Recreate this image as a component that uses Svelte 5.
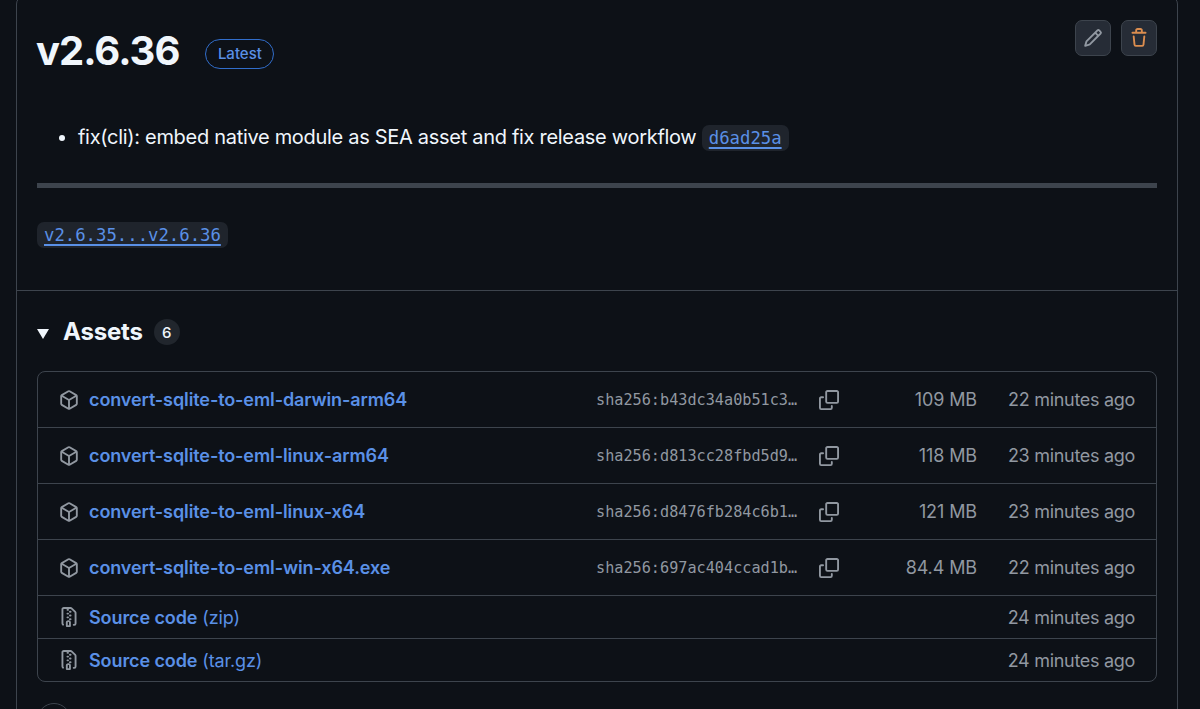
<script>
  const pkg = "m8.878.392 5.25 3.045c.54.314.872.89.872 1.514v6.098a1.75 1.75 0 0 1-.872 1.514l-5.25 3.045a1.75 1.75 0 0 1-1.756 0l-5.25-3.045A1.75 1.75 0 0 1 1 11.049V4.951c0-.624.332-1.201.872-1.514L7.122.392a1.75 1.75 0 0 1 1.756 0ZM7.875 1.69l-4.63 2.685L8 7.133l4.755-2.758-4.63-2.685a.248.248 0 0 0-.25 0ZM2.5 5.677v5.372c0 .09.047.171.125.216l4.625 2.683V8.432Zm6.25 8.271 4.625-2.683a.25.25 0 0 0 .125-.216V5.677L8.75 8.432Z";
  const zip = "M3.5 1.75v11.5c0 .09.048.173.126.217a.75.75 0 0 1-.752 1.298A1.748 1.748 0 0 1 2 13.25V1.75C2 .784 2.784 0 3.75 0h5.586c.464 0 .909.185 1.237.513l2.914 2.914c.329.328.513.773.513 1.237v8.586A1.75 1.75 0 0 1 12.25 15h-.5a.75.75 0 0 1 0-1.5h.5a.25.25 0 0 0 .25-.25V4.664a.25.25 0 0 0-.073-.177L9.513 1.573a.25.25 0 0 0-.177-.073H7.25a.75.75 0 0 1 0 1.5h-.5a.75.75 0 0 1 0-1.5h-3a.25.25 0 0 0-.25.25Zm3.75 8.75h.5c.966 0 1.75.784 1.75 1.75v3a.75.75 0 0 1-.75.75h-2.5a.75.75 0 0 1-.75-.75v-3c0-.966.784-1.75 1.75-1.75ZM6 5.25a.75.75 0 0 1 .75-.75h.5a.75.75 0 0 1 0 1.5h-.5A.75.75 0 0 1 6 5.25Zm.75 2.25h.5a.75.75 0 0 1 0 1.5h-.5a.75.75 0 0 1 0-1.5ZM8 6.75A.75.75 0 0 1 8.75 6h.5a.75.75 0 0 1 0 1.5h-.5A.75.75 0 0 1 8 6.75ZM8.75 3h.5a.75.75 0 0 1 0 1.5h-.5a.75.75 0 0 1 0-1.5ZM8 9.75A.75.75 0 0 1 8.75 9h.5a.75.75 0 0 1 0 1.5h-.5A.75.75 0 0 1 8 9.75Zm-1 2.5v2.25h1v-2.25a.25.25 0 0 0-.25-.25h-.5a.25.25 0 0 0-.25.25Z";
  const assets = [
    { name: "convert-sqlite-to-eml-darwin-arm64", sha: "sha256:b43dc34a0b51c3…", size: "109 MB", time: "22 minutes ago" },
    { name: "convert-sqlite-to-eml-linux-arm64", sha: "sha256:d813cc28fbd5d9…", size: "118 MB", time: "23 minutes ago" },
    { name: "convert-sqlite-to-eml-linux-x64", sha: "sha256:d8476fb284c6b1…", size: "121 MB", time: "23 minutes ago" },
    { name: "convert-sqlite-to-eml-win-x64.exe", sha: "sha256:697ac404ccad1b…", size: "84.4 MB", time: "22 minutes ago" }
  ];
  const sources = [
    { ext: "(zip)", time: "24 minutes ago" },
    { ext: "(tar.gz)", time: "24 minutes ago" }
  ];
</script>

<div class="page">
  <section class="card">
    <div class="top">
      <div class="head">
        <div class="title">
          <h1>v2.6.36</h1>
          <span class="label">Latest</span>
        </div>
        <div class="actions">
          <button class="btn" aria-label="Edit">
            <svg viewBox="0 0 16 16" width="20" height="20" fill="#9198a1"><path d="M11.013 1.427a1.75 1.75 0 0 1 2.474 0l1.086 1.086a1.75 1.75 0 0 1 0 2.474l-8.61 8.61c-.21.21-.47.364-.756.445l-3.251.93a.75.75 0 0 1-.927-.928l.929-3.25c.081-.286.235-.547.445-.758l8.61-8.61Zm.176 4.823L9.75 4.81l-6.286 6.287a.253.253 0 0 0-.064.108l-.558 1.953 1.953-.558a.253.253 0 0 0 .108-.064Zm1.238-3.763a.25.25 0 0 0-.354 0L10.811 3.75l1.439 1.44 1.263-1.263a.25.25 0 0 0 0-.354Z"/></svg>
          </button>
          <button class="btn" aria-label="Delete">
            <svg viewBox="0 0 16 16" width="20" height="20" fill="#db8d4f"><path d="M11 1.75V3h2.25a.75.75 0 0 1 0 1.5H2.75a.75.75 0 0 1 0-1.5H5V1.75C5 .784 5.784 0 6.75 0h2.5C10.216 0 11 .784 11 1.75ZM4.496 6.675l.66 6.6a.25.25 0 0 0 .249.225h5.19a.25.25 0 0 0 .249-.225l.66-6.6a.75.75 0 0 1 1.492.149l-.66 6.6A1.748 1.748 0 0 1 10.595 15h-5.19a1.75 1.75 0 0 1-1.741-1.575l-.66-6.6a.75.75 0 1 1 1.492-.15ZM6.5 1.75V3h3V1.75a.25.25 0 0 0-.25-.25h-2.5a.25.25 0 0 0-.25.25Z"/></svg>
          </button>
        </div>
      </div>
      <ul class="notes">
        <li>fix(cli): embed native module as SEA asset and fix release workflow <code class="tag"><a href="#c">d6ad25a</a></code></li>
      </ul>
      <hr />
      <p class="compare"><code class="tag"><a href="#d">v2.6.35...v2.6.36</a></code></p>
    </div>

    <div class="assets">
      <div class="assets-head">
        <svg class="caret" viewBox="0 0 12 10" width="12" height="10" fill="#f0f6fc"><path d="M0 0h12L6 10Z"/></svg>
        <h2>Assets</h2>
        <span class="count">6</span>
      </div>
      <div class="box">
        {#each assets as a}
          <div class="row">
            <div class="name">
              <svg viewBox="0 0 16 16" width="20" height="20" fill="#9198a1"><path d={pkg}/></svg>
              <a href="#a">{a.name}</a>
            </div>
            <div class="sha">{a.sha}</div>
            <svg class="copy" viewBox="0 0 16 16" width="20" height="20" fill="#9198a1"><path d="M0 6.75C0 5.784.784 5 1.75 5h1.5a.75.75 0 0 1 0 1.5h-1.5a.25.25 0 0 0-.25.25v7.5c0 .138.112.25.25.25h7.5a.25.25 0 0 0 .25-.25v-1.5a.75.75 0 0 1 1.5 0v1.5A1.75 1.75 0 0 1 9.25 16h-7.5A1.75 1.75 0 0 1 0 14.25Z"/><path d="M5 1.75C5 .784 5.784 0 6.75 0h7.5C15.216 0 16 .784 16 1.75v7.5A1.75 1.75 0 0 1 14.25 11h-7.5A1.75 1.75 0 0 1 5 9.25Zm1.75-.25a.25.25 0 0 0-.25.25v7.5c0 .138.112.25.25.25h7.5a.25.25 0 0 0 .25-.25v-7.5a.25.25 0 0 0-.25-.25Z"/></svg>
            <div class="size">{a.size}</div>
            <div class="time">{a.time}</div>
          </div>
        {/each}
        {#each sources as s}
          <div class="row src">
            <div class="name">
              <svg viewBox="0 0 16 16" width="20" height="20" fill="#9198a1"><path d={zip}/></svg>
              <a href="#s">Source code</a><span class="ext">{s.ext}</span>
            </div>
            <div class="time">{s.time}</div>
          </div>
        {/each}
      </div>
      <div class="reaction"></div>
    </div>
  </section>
</div>

<style>
  :global(body) {
    margin: 0;
    background: #0d1117;
    overflow: hidden;
  }
  .page {
    height: 709px;
    overflow: hidden;
    padding: 0 22px 0 16px;
    box-sizing: border-box;
    font-family: Inter, "Liberation Sans", sans-serif;
    color: #f0f6fc;
  }
  .card {
    margin-top: -4px;
    border: 1px solid #3d444d;
    border-radius: 8px;
  }
  .top {
    padding: 24px 20px 0;
    height: 294px;
    box-sizing: border-box;
    border-bottom: 1px solid #3d444d;
    display: flex;
    flex-direction: column;
  }
  .head {
    display: flex;
    justify-content: space-between;
    align-items: flex-start;
    height: 60px;
  }
  .title {
    display: flex;
    align-items: center;
    gap: 26px;
    height: 60px;
  }
  h1 {
    margin: 0 0 0 -1px;
    font-size: 40px;
    font-weight: 700;
    line-height: 50px;
    letter-spacing: -1px;
  }
  .label {
    border: 1px solid #316dca;
    border-radius: 999px;
    color: #5a90e6;
    font-size: 15px;
    font-weight: 500;
    line-height: 28px;
    padding: 0 11.5px;
    margin-top: 5px;
  }
  .actions {
    display: flex;
    gap: 10px;
    margin-top: -1px;
  }
  .btn {
    width: 36px;
    height: 36px;
    padding: 0;
    border: 1px solid #3d444d;
    border-radius: 7px;
    background: #262c36;
    display: flex;
    align-items: center;
    justify-content: center;
  }
  .notes {
    margin: 41px 0 0;
    padding: 0 0 0 41px;
    font-size: 20px;
    line-height: 30px;
    letter-spacing: -0.3px;
  }
  .notes li {
    color: #f0f6fc;
  }
  .tag {
    font-family: "DejaVu Sans Mono", monospace;
    font-size: 17.3px;
    letter-spacing: 0;
    background: #1f242c;
    border-radius: 7px;
    padding: 3px 7px;
  }
  .tag a {
    color: #5a90e6;
    text-decoration: underline;
    text-decoration-thickness: 1.5px;
    text-underline-offset: 3px;
  }
  hr {
    margin: 30px 0 0;
    height: 5px;
    border: 0;
    background: #3d444d;
  }
  .compare {
    margin: 33px 0 0;
    line-height: 26px;
    font-size: 20px;
  }
  .assets {
    padding: 25px 20px 0;
    position: relative;
  }
  .assets-head {
    display: flex;
    align-items: center;
    height: 32px;
    margin-bottom: 23px;
  }
  .caret {
    margin-right: 14px;
    margin-top: 3px;
  }
  h2 {
    margin: 0;
    font-size: 24px;
    font-weight: 700;
    line-height: 32px;
    letter-spacing: -0.2px;
  }
  .count {
    margin-left: 11px;
    width: 26px;
    height: 26px;
    border-radius: 50%;
    background: #21262d;
    font-size: 15px;
    font-weight: 500;
    display: flex;
    align-items: center;
    justify-content: center;
  }
  .box {
    border: 1px solid #3d444d;
    border-radius: 8px;
  }
  .row {
    height: 56px;
    box-sizing: border-box;
    display: flex;
    align-items: center;
    padding: 0 21px;
    font-size: 18px;
    color: #9198a1;
    border-top: 1px solid #3d444d;
  }
  .row:first-child {
    border-top: 0;
    height: 55px;
  }
  .row.src {
    height: 43px;
  }
  .name {
    display: flex;
    align-items: center;
    flex: 1;
    min-width: 0;
    gap: 10px;
  }
  .name a {
    color: #5a90e6;
    font-weight: 600;
    text-decoration: none;
    letter-spacing: -0.1px;
  }
  .ext {
    color: #5a90e6;
    margin-left: -5px;
    letter-spacing: -0.15px;
  }
  .sha {
    font-family: "DejaVu Sans Mono", monospace;
    font-size: 15.2px;
    width: 223px;
  }
  .copy {
    margin-right: 41px;
  }
  .size {
    width: 97px;
    text-align: right;
    letter-spacing: -0.1px;
  }
  .time {
    width: 158px;
    text-align: right;
    letter-spacing: -0.3px;
  }
  .reaction {
    width: 32px;
    height: 32px;
    border: 1px solid #3d444d;
    border-radius: 50%;
    margin-top: 21px;
    background: #0d1117;
  }
</style>
